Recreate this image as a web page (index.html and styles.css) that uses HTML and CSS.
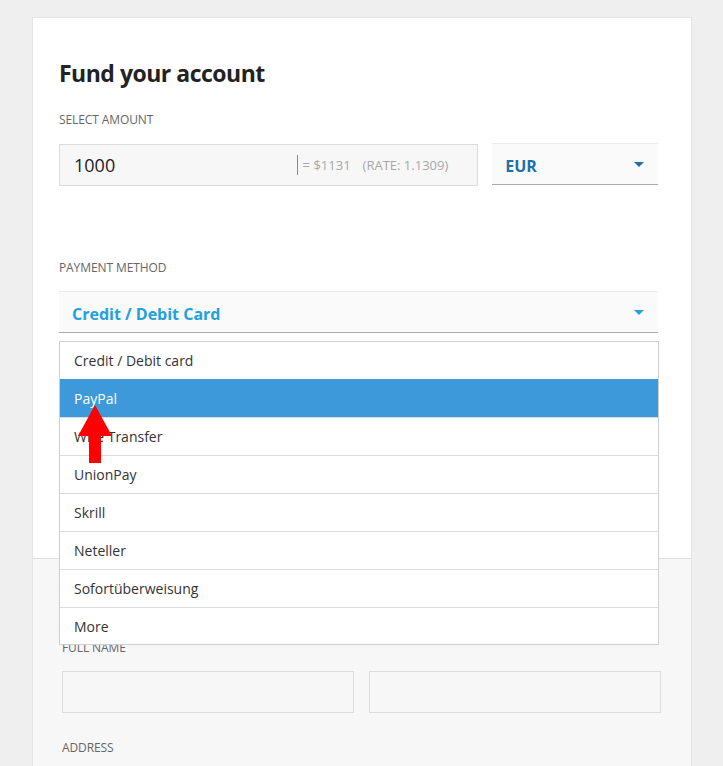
FILE: index.html
```html
<!DOCTYPE html>
<html>
<head>
<meta charset="utf-8">
<link rel="stylesheet" href="styles.css">
</head>
<body>
<div class="card">
  <section class="card-top">
    <h1 class="title">Fund your account</h1>
    <div class="label">SELECT AMOUNT</div>
    <div class="amount-row">
      <div class="amount-input">
        <span class="amount-value">1000</span>
        <span class="amount-conv"><span class="sep"></span>= $1131<span class="rate">(RATE: 1.1309)</span></span>
      </div>
      <div class="select currency">
        <span class="select-value">EUR</span>
        <span class="caret"></span>
      </div>
    </div>
    <div class="label label-payment">PAYMENT METHOD</div>
    <div class="payment-wrap">
      <div class="select payment">
        <span class="select-value">Credit / Debit Card</span>
        <span class="caret"></span>
      </div>
      <ul class="menu">
        <li class="menu-item">Credit / Debit card</li>
        <li class="menu-item active">PayPal</li>
        <li class="menu-item">Wire Transfer</li>
        <li class="menu-item">UnionPay</li>
        <li class="menu-item">Skrill</li>
        <li class="menu-item">Neteller</li>
        <li class="menu-item">Sofortüberweisung</li>
        <li class="menu-item">More</li>
      </ul>
      <svg class="arrow" width="36" height="58" viewBox="0 0 36 58">
        <polygon points="18,0 35,31 24,31 24,58 12,58 12,31 1,31" fill="#f00"/>
      </svg>
    </div>
  </section>
  <section class="card-bottom">
    <div class="label">FULL NAME</div>
    <div class="name-row">
      <div class="text-input"></div>
      <div class="text-input"></div>
    </div>
    <div class="label label-address">ADDRESS</div>
  </section>
</div>
</body>
</html>
```

FILE: styles.css
```css
* { box-sizing: border-box; }
html, body { margin: 0; padding: 0; }
html { overflow: hidden; }
body {
  background: #efefef;
  font-family: "Open Sans", "DejaVu Sans", sans-serif;
  color: #333;
  padding-top: 17px;
  height: 766px;
  overflow: hidden;
}
.card {
  width: 660px;
  margin-left: 32px;
  background: #fff;
  border: 1px solid #e4e4e4;
  border-bottom: none;
}
.card-top {
  height: 540px;
  padding: 40px 33px 0 26px;
}
.title {
  margin: 0;
  font-size: 23px;
  line-height: 30px;
  font-weight: 700;
  color: #222;
  letter-spacing: -0.5px;
}
.label {
  font-size: 12px;
  line-height: 16px;
  color: #666;
  letter-spacing: -0.1px;
}
.card-top > .label:first-of-type { margin-top: 24px; }
.amount-row {
  display: flex;
  gap: 14px;
  margin-top: 15px;
  height: 42px;
}
.amount-input {
  width: 420px;
  height: 42px;
  margin-top: 1px;
  background: #f7f7f7;
  border: 1px solid #dcdcdc;
  display: flex;
  align-items: center;
  justify-content: space-between;
  padding: 0 29px 0 14px;
}
.amount-value {
  font-size: 18px;
  color: #222;
}
.amount-conv {
  display: flex;
  align-items: center;
  font-size: 13px;
  color: #a8a8a8;
}
.sep {
  width: 1px;
  height: 20px;
  background: #888;
  margin-right: 5px;
}
.rate { margin-left: 12px; }
.select {
  position: relative;
  background: #fafafa;
  border-top: 1px solid #ececec;
  border-bottom: 1px solid #a9a9a9;
  height: 42px;
  display: flex;
  align-items: center;
  justify-content: space-between;
  padding: 3px 14px 0 13px;
}
.currency { width: 166px; }
.select-value {
  font-size: 16px;
  font-weight: 700;
}
.currency .select-value { color: #1c70ab; }
.payment .select-value { color: #22a0df; }
.caret {
  width: 0; height: 0;
  border-left: 5px solid transparent;
  border-right: 5px solid transparent;
  border-top: 5px solid #1c70ab;
  margin-top: -2px;
}
.payment .caret { border-top-color: #22a0df; }
.label-payment { margin-top: 75px; }
.payment-wrap {
  position: relative;
  margin-top: 15px;
}
.menu {
  position: absolute;
  left: 0;
  top: 50px;
  width: 600px;
  margin: 0;
  padding: 0;
  list-style: none;
  background: #fff;
  border: 1px solid #cfcfcf;
  z-index: 5;
}
.menu-item {
  height: 38px;
  line-height: 37px;
  padding-left: 14px;
  font-size: 14px;
  color: #333;
  border-top: 1px solid #dcdcdc;
}
.menu-item:first-child { border-top: none; height: 37px; }
.menu-item:last-child { height: 37px; }
.menu-item.active {
  background: #3d99da;
  color: #fff;
  border-top-color: #3d99da;
}
.arrow {
  position: absolute;
  left: 18px;
  top: 114px;
  z-index: 6;
}
.card-bottom {
  background: #f7f7f7;
  border-top: 1px solid #dedede;
  padding: 81px 30px 0 29px;
  height: 208px;
}
.name-row {
  display: flex;
  gap: 15px;
  margin-top: 15px;
}
.text-input {
  flex: 1;
  height: 42px;
  background: #f7f7f7;
  border: 1px solid #dcdcdc;
}
.label-address { margin-top: 27px; }
```
